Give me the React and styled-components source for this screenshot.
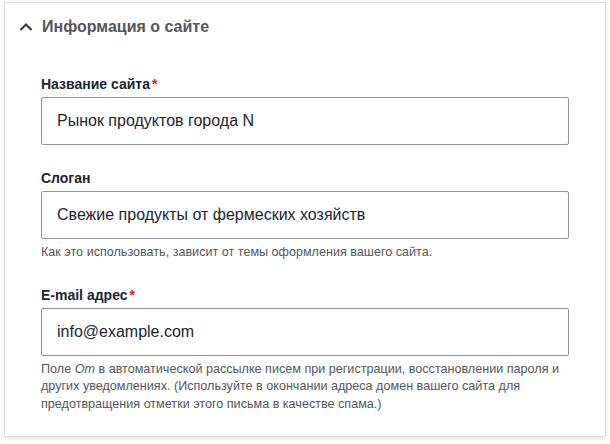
import React from 'react'
import styled, { createGlobalStyle } from 'styled-components'

const Global = createGlobalStyle`
  body {
    margin: 0;
    background: #fff;
    font-family: "Liberation Sans", Arial, sans-serif;
  }
`

const Page = styled.div`
  padding: 2px 4px 6px 4px;
`

const Card = styled.section`
  width: 602px;
  box-sizing: border-box;
  border: 1px solid #dedce6;
  border-radius: 2px;
  box-shadow: 0 2px 4px rgba(0, 0, 0, 0.1);
  background: #fff;
`

const Summary = styled.div`
  height: 46px;
  padding-top: 1px;
  display: flex;
  align-items: center;
  padding-left: 13px;
  gap: 8px;
`

const Chevron = styled.svg`
  width: 16px;
  height: 16px;
  flex: none;
`

const Title = styled.h2`
  margin: 0;
  font-size: 16px;
  font-weight: bold;
  color: #55565b;
`

const Body = styled.div`
  padding: 25px 36px 23px 36px;
  display: flex;
  flex-direction: column;
  gap: 24px;
`

const Field = styled.div`
  display: flex;
  flex-direction: column;
`

const Label = styled.label`
  font-size: 14px;
  line-height: 18px;
  font-weight: bold;
  color: #222330;
  margin-bottom: 4px;
`

const Star = styled.span`
  color: #d72222;
  margin-left: 2px;
`

const Input = styled.input`
  height: 48px;
  box-sizing: border-box;
  border: 1px solid #8e929c;
  border-radius: 2px;
  padding: 0 15px;
  font-family: "Liberation Sans", Arial, sans-serif;
  font-size: 16px;
  color: #222330;
  background: #fff;
  outline: none;
`

const Description = styled.div`
  margin-top: 5px;
  font-size: 12.6px;
  line-height: 17.5px;
  color: #55565b;
`

const App = () => {
  return (
    <>
      <Global />
      <Page>
        <Card>
          <Summary>
            <Chevron viewBox="0 0 16 16">
              <polyline points="2.5,11 8,5.5 13.5,11" fill="none" stroke="#3b3b4a" strokeWidth="2.2" />
            </Chevron>
            <Title>Информация о сайте</Title>
          </Summary>
          <Body>
            <Field>
              <Label>Название сайта<Star>*</Star></Label>
              <Input defaultValue="Рынок продуктов города N" />
            </Field>
            <Field>
              <Label>Слоган</Label>
              <Input defaultValue="Свежие продукты от фермеских хозяйств" />
              <Description>Как это использовать, зависит от темы оформления вашего сайта.</Description>
            </Field>
            <Field>
              <Label>E-mail адрес<Star>*</Star></Label>
              <Input defaultValue="info@example.com" />
              <Description>
                Поле <em>От</em> в автоматической рассылке писем при регистрации, восстановлении пароля и других уведомлениях. (Используйте в окончании адреса домен вашего сайта для предотвращения отметки этого письма в качестве спама.)
              </Description>
            </Field>
          </Body>
        </Card>
      </Page>
    </>
  )
}

export default App
